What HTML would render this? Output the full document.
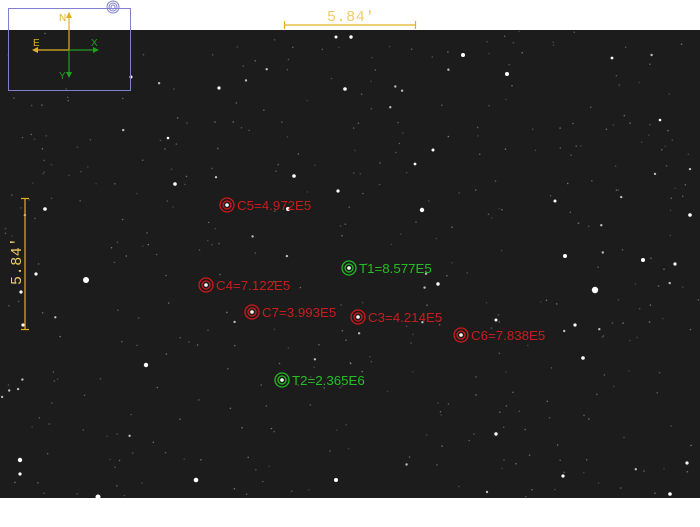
<!DOCTYPE html>
<html><head><meta charset="utf-8"><style>
html,body{margin:0;padding:0;background:#fff;width:700px;height:527px;overflow:hidden}
svg{display:block}
text{font-family:"Liberation Sans",sans-serif}
</style></head><body>
<svg id="s" width="700" height="527" viewBox="0 0 700 527" xmlns="http://www.w3.org/2000/svg">
<rect x="0" y="0" width="700" height="527" fill="#fff"/>
<rect x="0" y="30" width="700" height="468" fill="#1c1c1c"/>
<g id="stars" fill="#fff">
<circle cx="463" cy="55" r="2"/><circle cx="507" cy="74" r="2"/><circle cx="345" cy="89" r="1.8"/>
<circle cx="175" cy="184" r="1.8"/><circle cx="294" cy="176" r="1.8"/><circle cx="422" cy="210" r="2.2"/>
<circle cx="45" cy="209" r="1.8"/><circle cx="565" cy="256" r="2"/><circle cx="643" cy="260" r="2"/>
<circle cx="433" cy="150" r="1.5"/><circle cx="690" cy="215" r="1.8"/><circle cx="336" cy="37" r="1.5"/>
<circle cx="351" cy="37" r="1.7"/><circle cx="219" cy="88" r="1.6"/><circle cx="338" cy="191" r="1.6"/>
<circle cx="438" cy="284" r="1.7"/><circle cx="575" cy="325" r="1.6"/><circle cx="36" cy="274" r="1.6"/>
<circle cx="21" cy="292" r="1.6"/><circle cx="86" cy="280" r="3"/><circle cx="595" cy="290" r="3.2"/>
<circle cx="146" cy="365" r="2.2"/><circle cx="583" cy="358" r="1.8"/><circle cx="20" cy="460" r="2.2"/>
<circle cx="98" cy="497" r="2.5"/><circle cx="288" cy="209" r="2"/><circle cx="496" cy="320" r="1.5"/>
<circle cx="415" cy="164" r="1.4"/><circle cx="555" cy="201" r="1.5"/><circle cx="675" cy="264" r="1.6"/>
<circle cx="196" cy="480" r="2.3"/><circle cx="336" cy="480" r="2"/><circle cx="670" cy="494" r="1.8"/>
<circle cx="563" cy="476" r="1.6"/><circle cx="496" cy="434" r="1.7"/><circle cx="687" cy="463" r="1.6"/>
<circle cx="20" cy="474" r="1.6"/><circle cx="23" cy="325" r="1.6"/><circle cx="131" cy="77" r="1.5"/>
<circle cx="168" cy="138" r="1.3"/><circle cx="612" cy="58" r="1.4"/><circle cx="660" cy="120" r="1.3"/>
</g>
<g fill="none" stroke="#8080d0" stroke-width="1">
<rect x="8.5" y="8.5" width="122" height="82"/>
<circle cx="113" cy="7" r="6"/><circle cx="113" cy="7" r="4"/><circle cx="113" cy="7" r="2"/>
</g>
<g stroke-width="1.2">
<line x1="69" y1="15" x2="69" y2="50" stroke="#e0b020"/>
<line x1="35" y1="50" x2="69" y2="50" stroke="#e0b020"/>
<line x1="69" y1="50" x2="96" y2="50" stroke="#20a020"/>
<line x1="69" y1="50" x2="69" y2="74" stroke="#20a020"/>
</g>
<polygon points="69,12 66,18 72,18" fill="#e0b020"/>
<polygon points="32,50 38,47 38,53" fill="#e0b020"/>
<polygon points="99,50 93,47 93,53" fill="#20a020"/>
<polygon points="69,78 66,72 72,72" fill="#20a020"/>
<text x="59" y="21" font-size="10" fill="#e0b020">N</text>
<text x="33" y="46" font-size="10" fill="#e0b020">E</text>
<text x="91" y="46" font-size="10" fill="#20a020">X</text>
<text x="59" y="79" font-size="10" fill="#20a020">Y</text>
<g stroke="#e0b020" stroke-width="1.2">
<line x1="284" y1="25" x2="416" y2="25"/><line x1="284.5" y1="21" x2="284.5" y2="29"/><line x1="415.5" y1="21" x2="415.5" y2="29"/>
<line x1="25" y1="198" x2="25" y2="330"/><line x1="21" y1="198.5" x2="29" y2="198.5"/><line x1="21" y1="329.5" x2="29" y2="329.5"/>
</g>
<text x="351" y="21" font-size="15" fill="#f0cc60" text-anchor="middle" letter-spacing="0.6" style="font-family:'Liberation Mono',monospace">5.84'</text>
<text transform="translate(21,261) rotate(-90)" font-size="15" fill="#f0cc60" text-anchor="middle" letter-spacing="0.6" style="font-family:'Liberation Mono',monospace">5.84'</text>
<g font-size="13.3">
<g fill="none" stroke="#cc1a1a" stroke-width="1.3">
<circle cx="227" cy="205" r="7"/><circle cx="227" cy="205" r="4"/>
<circle cx="206" cy="285" r="7"/><circle cx="206" cy="285" r="4"/>
<circle cx="252" cy="312" r="7"/><circle cx="252" cy="312" r="4"/>
<circle cx="358" cy="317" r="7"/><circle cx="358" cy="317" r="4"/>
<circle cx="461" cy="335" r="7"/><circle cx="461" cy="335" r="4"/>
</g>
<g fill="none" stroke="#22b822" stroke-width="1.3">
<circle cx="349" cy="268" r="7"/><circle cx="349" cy="268" r="4"/>
<circle cx="282" cy="380" r="7"/><circle cx="282" cy="380" r="4"/>
</g>
<g fill="#fff"><circle cx="227" cy="205" r="1.8"/><circle cx="206" cy="285" r="1.8"/><circle cx="252" cy="312" r="1.8"/><circle cx="358" cy="317" r="1.8"/><circle cx="461" cy="335" r="1.8"/><circle cx="349" cy="268" r="1.8"/><circle cx="282" cy="380" r="1.8"/></g>
<g fill="#c81c1c">
<text x="237" y="210">C5=4.972E5</text>
<text x="216" y="290">C4=7.122E5</text>
<text x="262" y="317">C7=3.993E5</text>
<text x="368" y="322">C3=4.214E5</text>
<text x="471" y="340">C6=7.838E5</text>
</g>
<g fill="#22c022">
<text x="359" y="273">T1=8.577E5</text>
<text x="292" y="385">T2=2.365E6</text>
</g>
</g>
</svg>
<script>
(function(){var g=document.getElementById('stars');var s=12345;function r(){s=(s*16807)%2147483647;return s/2147483647;}
for(var i=0;i<420;i++){var c=document.createElementNS('http://www.w3.org/2000/svg','circle');
var b=r();c.setAttribute('cx',(r()*700).toFixed(1));c.setAttribute('cy',(31+r()*466).toFixed(1));
c.setAttribute('r',b>0.92?1.2:0.8);c.setAttribute('fill-opacity',b>0.92?0.7:(0.15+b*0.25).toFixed(2));g.insertBefore(c,g.firstChild);}})();
</script>
</body></html>
